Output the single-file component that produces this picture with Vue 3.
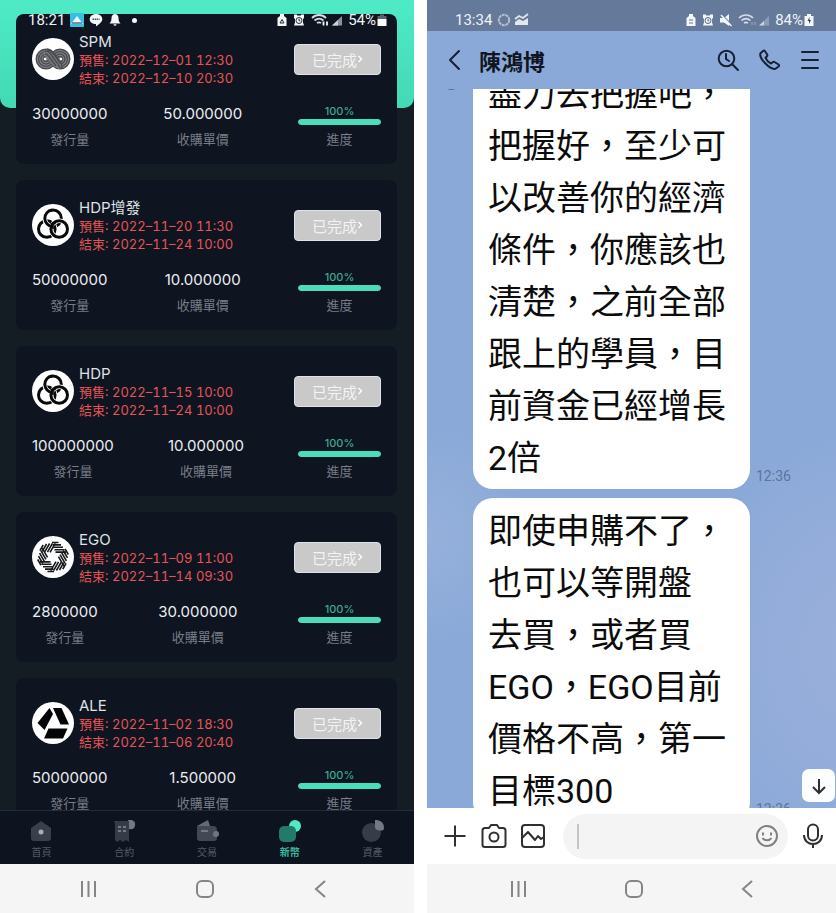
<script setup>
import { ref } from 'vue'

const coins = [
  { name: 'SPM', logo: 'loop', start: '2022–12–01 12:30', end: '2022–12–10 20:30', supply: '30000000', price: '50.000000', progress: 100 },
  { name: 'HDP增發', logo: 'knot', start: '2022–11–20 11:30', end: '2022–11–24 10:00', supply: '50000000', price: '10.000000', progress: 100 },
  { name: 'HDP', logo: 'knot', start: '2022–11–15 10:00', end: '2022–11–24 10:00', supply: '100000000', price: '10.000000', progress: 100 },
  { name: 'EGO', logo: 'star', start: '2022–11–09 11:00', end: '2022–11–14 09:30', supply: '2800000', price: '30.000000', progress: 100 },
  { name: 'ALE', logo: 'tri', start: '2022–11–02 18:30', end: '2022–11–06 20:40', supply: '50000000', price: '1.500000', progress: 100 }
]

const tabs = [
  { id: 'home', label: '首頁' },
  { id: 'contract', label: '合約' },
  { id: 'trade', label: '交易' },
  { id: 'coin', label: '新幣', active: true },
  { id: 'asset', label: '資產' }
]

const messages = [
  { time: '12:36', lines: ['盡力去把握吧，', '把握好，至少可', '以改善你的經濟', '條件，你應該也', '清楚，之前全部', '跟上的學員，目', '前資金已經增長', '2倍'] },
  { time: '12:36', lines: ['即使申購不了，', '也可以等開盤', '去買，或者買', 'EGO，EGO目前', '價格不高，第一', '目標300'] }
]

const turns = [0, 60, 120, 180, 240, 300]
const draft = ref('')
</script>

<template>
  <main class="screens">
    <section class="phone exchange">
      <div class="hero"></div>
      <div class="status status-left">
        <span class="clock">18:21</span>
        <svg class="s-photo" viewBox="0 0 14 14"><rect width="14" height="14" rx="1" fill="#35bfe0" /><path d="M1 11 7 3l6 8z" fill="#e9fbff" /><rect x="2" y="9" width="10" height="2" fill="#7b8f96" /></svg>
        <svg class="s-chat" viewBox="0 0 14 14"><path d="M7 1c3.600 0 6.300 2.200 6.300 5.200S9.500 11.500 7 13.300V11C3.400 11 .7 9 .7 6.200S3.400 1 7 1z" fill="#f4f6f8" /><path d="M3.500 6.200h7" stroke="#44505c" stroke-width="1.600" stroke-dasharray="1.500 .6" /></svg>
        <svg class="s-bell" viewBox="0 0 14 14"><path d="M7 1c2.300 0 3.500 1.800 3.500 4 0 3 .8 4.200 2 5.400H1.500c1.200-1.200 2-2.400 2-5.400 0-2.200 1.200-4 3.500-4zM5.500 11.200h3a1.500 1.500 0 0 1-3 0z" fill="#f4f6f8" /></svg>
        <i class="dot"></i>
        <span class="spacer"></span>
        <svg class="s-small" viewBox="0 0 10 14"><path d="M3 3V1h4v2l2.500 2v8h-9V5z" fill="#f4f6f8" /><path d="M3 10 5 6.500 7 10z" fill="none" stroke="#26313c" /></svg>
        <svg class="s-alarm" viewBox="0 0 12 14"><path d="M1 1.500h3v1h4v-1h3v4h-1v4l1 3H1l1-3v-4H1z" fill="#f4f6f8" /><circle cx="6" cy="7.500" r="3" fill="none" stroke="#26313c" /><path d="M6 5.800v2h1.300" fill="none" stroke="#26313c" /></svg>
        <svg class="s-wifi" viewBox="0 0 18 14"><path d="M1 5c4-4 10-4 14 0M3.500 7.500c3-2.500 6-2.500 9 0M6 10c1.500-1 2.500-1 4 0" fill="none" stroke="#d9dde2" stroke-width="1.800" /><path d="M12.500 8.500v4M16 12.500v-4" stroke="#f4f6f8" stroke-width="1.800" /></svg>
        <svg class="s-signal" viewBox="0 0 12 14"><path d="M1 12.500 11 3v9.500z" fill="#8c939b" /><path d="M1 12.500 7 7v5.500z" fill="#cdd1d6" /></svg>
        <span class="percent">54%</span>
        <svg class="s-small" viewBox="0 0 10 14"><path d="M3 1.500h4V3h2.500v3h-9V3H3z" fill="#59636d" /><path d="M.5 6h9v7h-9z" fill="#f8fafc" /></svg>
      </div>

      <div class="coin-list">
        <article v-for="coin in coins" :key="coin.name" class="card">
          <header class="card-head">
            <svg class="coin-logo" viewBox="0 0 42 42">
              <circle cx="21" cy="21" r="21" fill="#fff" />
              <g v-if="coin.logo === 'loop'" fill="none" stroke="#494b50" stroke-width="1.400">
                <circle cx="14" cy="21" r="10" fill="#85878a" stroke="none" />
                <circle cx="28" cy="21" r="10" fill="#85878a" stroke="none" />
                <circle cx="14" cy="21" r="9.800" /><circle cx="14" cy="21" r="7.400" /><circle cx="14" cy="21" r="5" /><circle cx="14" cy="21" r="2.600" />
                <circle cx="28" cy="21" r="9.800" /><circle cx="28" cy="21" r="7.400" /><circle cx="28" cy="21" r="5" /><circle cx="28" cy="21" r="2.600" />
                <path d="m15 11 6 4 10 12-4 4-6-3-10-13z" fill="#77797c" stroke="none" />
                <path d="M15 11c4 0 6 3 8 6l6 8c1 2 2 4 0 6M13 13c4 0 5 2 7 5l6 8c1 2 2 3 2 4M13 16c2 0 3 1 5 4l6 8M16 12c4 1 6 4 8 7l5 7" />
                <circle cx="13" cy="21" r="1.300" fill="#fff" stroke="none" /><circle cx="29" cy="21" r="1.300" fill="#fff" stroke="none" />
              </g>
              <g v-else-if="coin.logo === 'knot'" fill="none">
                <circle cx="21" cy="14.200" r="8.300" stroke="#08090b" stroke-width="3" />
                <circle cx="14.800" cy="25" r="8.300" stroke="#fff" stroke-width="4.600" />
                <circle cx="14.800" cy="25" r="8.300" stroke="#08090b" stroke-width="3" />
                <circle cx="27.200" cy="25" r="8.300" stroke="#fff" stroke-width="4.600" />
                <circle cx="27.200" cy="25" r="8.300" stroke="#08090b" stroke-width="3" />
                <path d="M18 6.500A8.300 8.300 0 0 0 18 21.900" stroke="#fff" stroke-width="4.600" />
                <path d="M20 6A8.300 8.300 0 0 0 20.500 22.500" stroke="#08090b" stroke-width="3" />
                <path d="M18 18.500 21 20.500 24 18.500M21 20.500V25" stroke="#08090b" stroke-width="1.500" />
              </g>
              <g v-else-if="coin.logo === 'star'" stroke="#17181a" stroke-width="1.600">
                <path v-for="turn in turns" :key="turn" :transform="`rotate(${turn} 21 21)`" d="M20 6.500H26.500M20.500 8.900h8.500M21.500 11.300h9.500M22.500 13.700H32.500M23.500 16.100H34" />
              </g>
              <g v-else fill="#030405">
                <path d="m17.500 6 3.500 6-8.500 16L5.500 21z" /><path d="M21 6h8.500L37 22.500h-8.500z" /><path d="M16.500 26.500h19L31 36.500H12z" />
              </g>
            </svg>
            <div class="coin-info">
              <h2>{{ coin.name }}</h2>
              <p>預售: {{ coin.start }}</p>
              <p>結束: {{ coin.end }}</p>
            </div>
            <button class="done" type="button">已完成<svg viewBox="0 0 6 10"><path d="m1.500 2 3 3-3 3" fill="none" stroke="#fff" stroke-width="1.300" /></svg></button>
          </header>
          <div class="stats">
            <div class="stat"><b>{{ coin.supply }}</b><small>發行量</small></div>
            <div class="stat"><b>{{ coin.price }}</b><small>收購單價</small></div>
            <div class="stat progress">
              <span>{{ coin.progress }}%</span>
              <div class="track"><div class="fill" :style="{ width: coin.progress + '%' }"></div></div>
              <small>進度</small>
            </div>
          </div>
        </article>
      </div>

      <nav class="tabs">
        <a v-for="tab in tabs" :key="tab.id" href="#" :class="{ active: tab.active }">
          <svg viewBox="0 0 24 24">
            <g v-if="tab.id === 'home'"><path d="M12 2 22 9v10q0 3-3 3H5q-3 0-3-3V9z" fill="#3a404b" /><circle cx="12" cy="13" r="2.500" fill="#a9adb3" /></g>
            <g v-else-if="tab.id === 'contract'"><path d="M16 1h3a4 4 0 0 1 4 5c0 3-2 5-6 4z" fill="#737983" /><path d="M2 2h15v21l-3-2-3 2-3-2-3 2-2-2V5z" fill="#363c47" /><path d="M6 8h3m2 0h3M6 12h3m2 0h3" stroke="#8a9098" stroke-width="1.500" /></g>
            <g v-else-if="tab.id === 'trade'"><path d="M2 7 13 1l2 6z" fill="#656b75" /><path d="M2 7h16q4 0 4 4v8q0 3-3 3H5q-3 0-3-3z" fill="#434954" /><path d="M6 12h7" stroke="#858b94" stroke-width="1.500" /><circle cx="21" cy="15" r="3" fill="#70767f" /></g>
            <g v-else-if="tab.id === 'coin'"><circle cx="17" cy="7" r="6" fill="#4cecc0" /><rect x="1" y="7" width="17" height="16" rx="5" fill="#25786c" /></g>
            <g v-else><circle cx="10.500" cy="13.500" r="9.500" fill="#373d48" /><path d="M14 1h2q7 1 7 8c0 3-3 3-7 2-2-1-2-2-2-4z" fill="#747a84" /></g>
          </svg>
          <span>{{ tab.label }}</span>
        </a>
      </nav>
      <footer class="system">
        <svg viewBox="0 0 20 20"><path d="M3 2v16M9.500 2v16M16 2v16" /></svg>
        <svg viewBox="0 0 20 20"><rect x="2" y="2" width="16" height="16" rx="5" /></svg>
        <svg viewBox="0 0 20 20"><path d="m14 2-9 8 9 8" /></svg>
      </footer>
    </section>

    <section class="phone chat">
      <div class="status status-right">
        <span class="clock">13:34</span>
        <svg class="s-chat" viewBox="0 0 14 14"><circle cx="7" cy="7" r="5.200" fill="none" stroke="#b5bfce" stroke-width="2" stroke-dasharray="3 .6" /></svg>
        <svg class="s-chart" viewBox="0 0 16 14"><path d="M1 6 5 3l4 2 5-4" fill="none" stroke="#e2e6ed" stroke-width="1.800" /><path d="m1 9 4-3 4 2 5-3v7H1z" fill="#e2e6ed" /></svg>
        <span class="spacer"></span>
        <svg class="s-small" viewBox="0 0 10 14"><path d="M3 3V1h4v2l2.500 2v8h-9V5z" fill="#f4f6f8" /><path d="M3 7h4M3 10h4" stroke="#65799b" /></svg>
        <svg class="s-alarm" viewBox="0 0 12 14"><path d="M1 1.500h3v1h4v-1h3v4h-1v4l1 3H1l1-3v-4H1z" fill="#f4f6f8" /><circle cx="6" cy="7.500" r="3" fill="none" stroke="#53678a" /><path d="M6 5.800v2h1.300" fill="none" stroke="#53678a" /></svg>
        <svg class="s-alarm" viewBox="0 0 12 14"><path d="M0 5h4l5-4v12L4 9.500H0z" fill="#f4f6f8" /><path d="m1 1 11 11" stroke="#65799b" stroke-width="1.500" /><path d="m1 2 10.500 11" stroke="#f4f6f8" stroke-width="1.500" /></svg>
        <svg class="s-wifi" viewBox="0 0 18 14"><path d="M1 5c4-4 10-4 14 0M3.500 7.500c3-2.500 6-2.500 9 0M6 10c1.500-1 2.500-1 4 0" fill="none" stroke="#d6dce6" stroke-width="1.600" /><path d="M14 9v3M17 12V9" stroke="#a1afc4" /></svg>
        <svg class="s-signal" viewBox="0 0 12 14"><path d="M1 12.500 11 3v9.500z" fill="#8d9cb6" /><path d="M1 12.500 6 8v4.500z" fill="#c8d0dd" /></svg>
        <span class="percent">84%</span>
        <svg class="s-small" viewBox="0 0 10 14"><path d="M3 1h4v2h2.500v10h-9V3H3z" fill="#f4f6f8" /><path d="M5.500 4 3.500 8H5v3l2-4H5.500z" fill="#344459" /></svg>
      </div>
      <header class="chat-head">
        <button type="button" aria-label="返回"><svg viewBox="0 0 24 24"><path d="m16 3-9 9 9 9" /></svg></button>
        <h1>陳鴻博</h1>
        <button type="button" aria-label="搜尋"><svg viewBox="0 0 24 24"><circle cx="10.500" cy="10.500" r="7.800" /><path d="m16 16 6 6M10 6v5l3 2" /></svg></button>
        <button type="button" aria-label="通話"><svg viewBox="0 0 24 24"><path d="M6 3 3.500 5.200C1.500 10 13 22 18.500 20.800L21.500 18.500c.8-.8.700-1.500 0-2L17.500 14c-.7-.5-1.300-.3-1.800.2L14 15.500c-2-1-4.500-3.500-5.500-5.700L10 8.200c.5-.5.500-1 .2-1.700L8 3.300C7.500 2.500 6.800 2.300 6 3z" /></svg></button>
        <button type="button" aria-label="選單"><svg viewBox="0 0 24 24"><path d="M4 4h16M4 12h16M4 20h16" /></svg></button>
      </header>
      <div class="thread">
        <i class="avatar-edge"></i>
        <div class="messages">
          <div v-for="(message, i) in messages" :key="i" class="message">
            <p class="bubble"><span v-for="line in message.lines" :key="line">{{ line }}</span></p>
            <time>{{ message.time }}</time>
          </div>
        </div>
        <button class="jump" type="button" aria-label="最新訊息"><svg viewBox="0 0 20 20"><path d="M10 3v14M4 11l6 6 6-6" /></svg></button>
      </div>
      <form class="composer" @submit.prevent>
        <button type="button" aria-label="新增"><svg viewBox="0 0 26 26"><path d="M13 2.500v21M2.500 13h21" /></svg></button>
        <button type="button" aria-label="相機"><svg viewBox="0 0 26 26"><path d="M4 5h4l2-3h6l2 3h4q2.500 0 2.500 2.500v14Q24.500 24 22 24H4q-2.500 0-2.500-2.500v-14Q1.500 5 4 5z" /><circle cx="13" cy="14" r="4.500" /></svg></button>
        <button type="button" aria-label="圖片"><svg viewBox="0 0 26 26"><rect x="2" y="2" width="22" height="22" rx="3" /><path d="m2 15 6-6 7 8 3-4 3 3 3-2" /></svg></button>
        <div class="field">
          <i class="caret"></i>
          <input v-model="draft" type="text" aria-label="訊息" />
          <svg viewBox="0 0 24 24"><circle cx="12" cy="12" r="10" /><path d="M8 8.500v3M16 8.500v3M7.500 14c2 3 7 3 9 0" /></svg>
        </div>
        <button type="button" aria-label="語音"><svg viewBox="0 0 26 26"><rect x="8" y="1.500" width="10" height="16" rx="5" /><path d="M4 12c0 12 18 12 18 0M13 21v4" /></svg></button>
      </form>
      <footer class="system">
        <svg viewBox="0 0 20 20"><path d="M3 2v16M9.500 2v16M16 2v16" /></svg>
        <svg viewBox="0 0 20 20"><rect x="2" y="2" width="16" height="16" rx="5" /></svg>
        <svg viewBox="0 0 20 20"><path d="m14 2-9 8 9 8" /></svg>
      </footer>
    </section>
  </main>
</template>

<style>
body { margin: 0; background: #fff; }
</style>

<style scoped>
.screens { display: grid; grid-template-columns: 414fr 409fr; gap: 13px; height: 100vh; overflow: hidden; font-family: Inter, "Noto Sans CJK TC", sans-serif; }
.phone { position: relative; display: flex; flex-direction: column; min-width: 0; min-height: 0; overflow: hidden; }
button { border: 0; padding: 0; background: none; font: inherit; }
svg { flex: none; }
h1, h2, p { margin: 0; }
.exchange { background: #141d24; }
.hero { position: absolute; top: 0; left: 0; right: 0; height: 108px; border-radius: 0 0 10px 10px; background: linear-gradient(#4eebc6, #43d9b5); }
.status { display: flex; align-items: center; color: #f0f3f6; font: 15px/20px Roboto, sans-serif; }
.status svg { height: 14px; }
.status-left { position: absolute; z-index: 2; top: 10px; left: 28px; right: 27px; }
.s-photo, .s-chat, .s-bell { width: 14px; margin-left: 5px; }
.dot { width: 5px; height: 5px; margin-left: 10px; border-radius: 50%; background: #f4f6f8; }
.spacer { flex: 1; }
.s-small { width: 10px; }
.s-alarm { width: 12px; margin-left: 6px; }
.s-wifi { width: 18px; margin-left: 6px; }
.s-signal { width: 12px; margin-left: 2px; }
.s-chart { width: 16px; margin-left: 3px; }
.percent { margin: 0 1px 0 5px; }
.coin-list { position: relative; flex: 1; min-height: 0; overflow: hidden; display: flex; flex-direction: column; gap: 16px; padding: 14px 17px 0 16px; }
.card { flex: none; box-sizing: border-box; height: 150px; padding: 17px 16px 0; border-radius: 8px; background: #0e1420; }
.card-head { display: flex; height: 56px; align-items: center; }
.coin-logo { width: 42px; height: 42px; }
.coin-info { flex: 1; margin-left: 5px; white-space: nowrap; }
.coin-info h2 { color: #dfe2e7; font-size: 15px; font-weight: 400; line-height: 19px; }
.coin-info p { color: #e65457; font-size: 13px; line-height: 18px; font-variant-numeric: tabular-nums; }
.done { display: flex; align-items: center; justify-content: center; box-sizing: border-box; width: 87px; height: 31px; border: 1px solid #dfe2ea; border-radius: 4px; background: #c9c9c9; color: #f3f3f3; font-size: 15px; }
.done svg { width: 6px; height: 10px; }
.stats { display: flex; justify-content: space-between; margin-top: 16px; }
.stat { display: flex; flex-direction: column; align-items: center; }
.stat b { color: #eceef1; font-size: 15px; font-weight: 400; line-height: 22px; }
.stat small { margin-top: 4px; color: #777c86; font-size: 13px; line-height: 20px; }
.progress { width: 83px; }
.progress span { color: #3ba992; font-size: 11px; font-weight: 500; line-height: 16px; }
.track { align-self: stretch; height: 6px; border-radius: 3px; background: #26313b; overflow: hidden; }
.fill { height: 6px; border-radius: 3px; background: #4bdcb9; }
.tabs { position: relative; flex: none; display: grid; grid-template-columns: repeat(5, 1fr); box-sizing: border-box; height: 54px; border-top: 1px solid #222c39; background: #0d1420; }
.tabs a { display: flex; flex-direction: column; align-items: center; gap: 2px; padding-top: 8px; color: #555b66; font-size: 10px; line-height: 14px; text-decoration: none; }
.tabs svg { width: 24px; height: 24px; }
.tabs .active { color: #37b79b; font-weight: 700; }
.system { flex: none; display: flex; align-items: center; justify-content: space-between; height: 49px; padding: 0 20% 0 19%; background: #f5f5f5; }
.chat .system { padding: 0 19% 0 20%; }
.system svg { width: 20px; height: 20px; fill: none; stroke: #858585; stroke-width: 2; }

.chat { background: #8aa9d8; }
.status-right { flex: none; box-sizing: border-box; height: 31px; padding: 9px 22px 0 28px; background: #65799b; }
.chat-head { flex: none; display: flex; align-items: center; gap: 17px; box-sizing: border-box; height: 58px; padding: 0 14px 0 16px; }
.chat-head h1 { flex: 1; margin-left: -5px; color: #10151f; font: 700 22px/30px "Noto Sans CJK TC", sans-serif; }
.chat-head button { width: 24px; height: 24px; }
.chat-head svg { display: block; width: 24px; height: 24px; fill: none; stroke: #172033; stroke-width: 2; stroke-linecap: round; stroke-linejoin: round; }
.thread { position: relative; flex: 1; min-height: 0; overflow: hidden; background: radial-gradient(ellipse at 105% 78%, #9aafdb 0, #92acd9 18%, transparent 28%), radial-gradient(ellipse at 0 62%, #96b0db 0, transparent 18%), #8aa9d8; }
.avatar-edge { position: absolute; top: -4px; left: 20px; width: 9px; height: 5px; border-radius: 50%; background: #596f95; }
.messages { display: flex; flex-direction: column; gap: 9px; margin-top: -28px; padding-left: 46px; }
.message { display: flex; align-items: flex-end; }
.bubble { flex: none; box-sizing: border-box; width: 277px; padding: 7px 0 5px 15px; border-radius: 20px; background: #fff; color: #0c0c0c; font: 34px/52px Roboto, "Noto Sans CJK TC", sans-serif; white-space: nowrap; }
.bubble span { display: block; }
.message time { margin: 0 0 3px 6px; color: #5c749e; font: 14px/20px Roboto, sans-serif; }
.jump { position: absolute; right: 1px; bottom: 6px; width: 33px; height: 33px; display: grid; place-items: center; border-radius: 7px; background: #fbfdff; }
.jump svg { width: 20px; height: 20px; fill: none; stroke: #303030; stroke-width: 2; }
.composer { flex: none; display: flex; align-items: center; box-sizing: border-box; height: 56px; padding: 0 10px 0 15px; background: #fff; }
.composer button { width: 26px; height: 26px; margin-right: 13px; }
.composer button:last-child { margin: 0; }
.composer svg { display: block; width: 26px; height: 26px; fill: none; stroke: #303030; stroke-width: 2; stroke-linejoin: round; }
.field { flex: 1; display: flex; align-items: center; min-width: 0; height: 45px; margin: 0 12px 0 4px; padding: 0 9px 0 14px; border-radius: 23px; background: #f4f4f4; }
.caret { width: 2px; height: 25px; background: #c5c5c5; }
.field input { flex: 1; min-width: 0; border: 0; outline: 0; padding: 0 6px; background: transparent; font: 16px Roboto, sans-serif; }
.field svg { width: 24px; height: 24px; stroke: #808080; }
</style>
